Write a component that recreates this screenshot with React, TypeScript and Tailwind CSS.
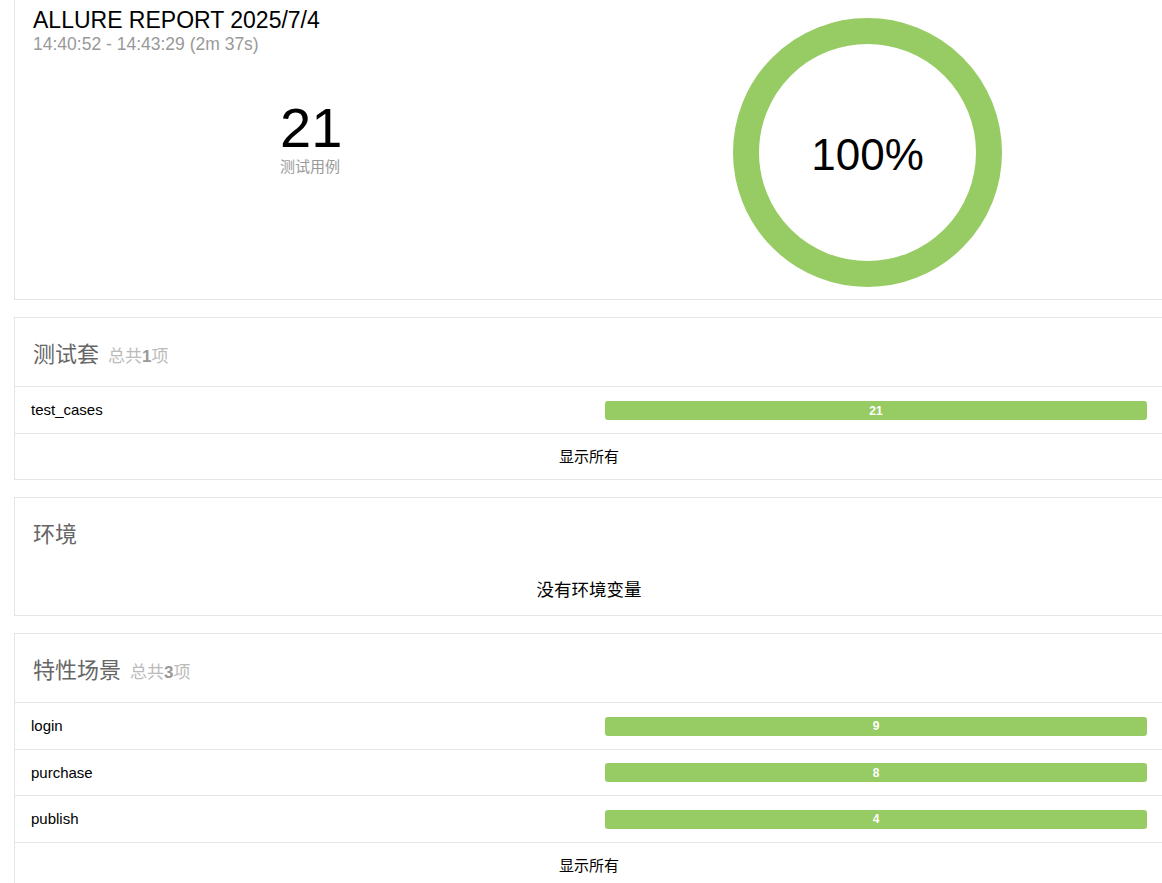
import React from "react";

const font = "font-['Liberation_Sans','Noto_Sans_CJK_SC',sans-serif]";

type Item = { name: string; count: number };

function BarRow({ item, tall }: { item: Item; tall?: boolean }) {
  return (
    <div className={`flex items-center border-t border-[#e5e5e5] pt-[1px] ${tall ? "h-[47px]" : "h-[46.5px]"}`}>
      <div className="w-[590px] pl-[16px] text-[15px] text-black">{item.name}</div>
      <div className="flex h-[19px] w-[542px] items-center justify-center rounded-[3px] bg-[#97cc64] text-[12px] font-bold text-white">
        {item.count}
      </div>
    </div>
  );
}

function Card({ children }: { children: React.ReactNode }) {
  return (
    <div className="mt-[17px] w-[1149px] border border-r-0 border-[#e5e5e5] bg-white">{children}</div>
  );
}

function CardHeader({ title, total }: { title: string; total?: number }) {
  return (
    <div className="flex h-[68px] items-start pl-[18px] pt-[25px]">
      <span className="text-[22px] leading-[24px] text-[#666]">{title}</span>
      {total !== undefined && (
        <span className="ml-[9px] mt-[5px] text-[17px] leading-[18px] text-[#bbb]">
          总共<b className="text-[#999]">{total}</b>项
        </span>
      )}
    </div>
  );
}

function ShowAll() {
  return (
    <div className="flex h-[46px] items-center justify-center border-t border-[#e5e5e5] pt-[2px] text-[15px] text-black">
      显示所有
    </div>
  );
}

export default function App() {
  const suites: Item[] = [{ name: "test_cases", count: 21 }];
  const features: Item[] = [
    { name: "login", count: 9 },
    { name: "purchase", count: 8 },
    { name: "publish", count: 4 },
  ];

  return (
    <div className={`h-[883px] w-[1162px] overflow-hidden bg-white pl-[14px] ${font}`}>
      {/* Summary */}
      <div className="flex h-[300px] w-[1149px] border-b border-l border-[#e5e5e5]">
        <div className="w-[590px]">
          <div className="pl-[18px] pt-[7px]">
            <div className="text-[23px] leading-[26px] text-black">ALLURE REPORT 2025/7/4</div>
            <div className="mt-[2px] text-[17.5px] leading-[18px] text-[#999]">14:40:52 - 14:43:29 (2m 37s)</div>
          </div>
          <div className="ml-[265px] mt-[47px] inline-flex flex-col">
            <span className="text-[56px] leading-[56px] text-black">21</span>
            <span className="mt-[1px] text-[15px] leading-[20px] text-[#999]">测试用例</span>
          </div>
        </div>
        <div className="flex-1">
          <div className="relative ml-[128px] mt-[18px] h-[269px] w-[269px]">
            <svg width="269" height="269" viewBox="0 0 269 269">
              <circle cx="134.5" cy="134.5" r="121.5" fill="none" stroke="#97cc64" strokeWidth="26" />
            </svg>
            <div className="absolute inset-0 flex items-center justify-center pt-[5px] text-[44px] leading-[48px] text-black">
              100%
            </div>
          </div>
        </div>
      </div>

      {/* Suites */}
      <Card>
        <CardHeader title="测试套" total={1} />
        {suites.map((s) => (
          <BarRow key={s.name} item={s} tall />
        ))}
        <ShowAll />
      </Card>

      {/* Environment */}
      <Card>
        <CardHeader title="环境" />
        <div className="flex h-[49px] items-start justify-center pt-[14px] text-[17.5px] leading-[20px] text-black">
          没有环境变量
        </div>
      </Card>

      {/* Features */}
      <Card>
        <CardHeader title="特性场景" total={3} />
        {features.map((f) => (
          <BarRow key={f.name} item={f} />
        ))}
        <ShowAll />
      </Card>
    </div>
  );
}
